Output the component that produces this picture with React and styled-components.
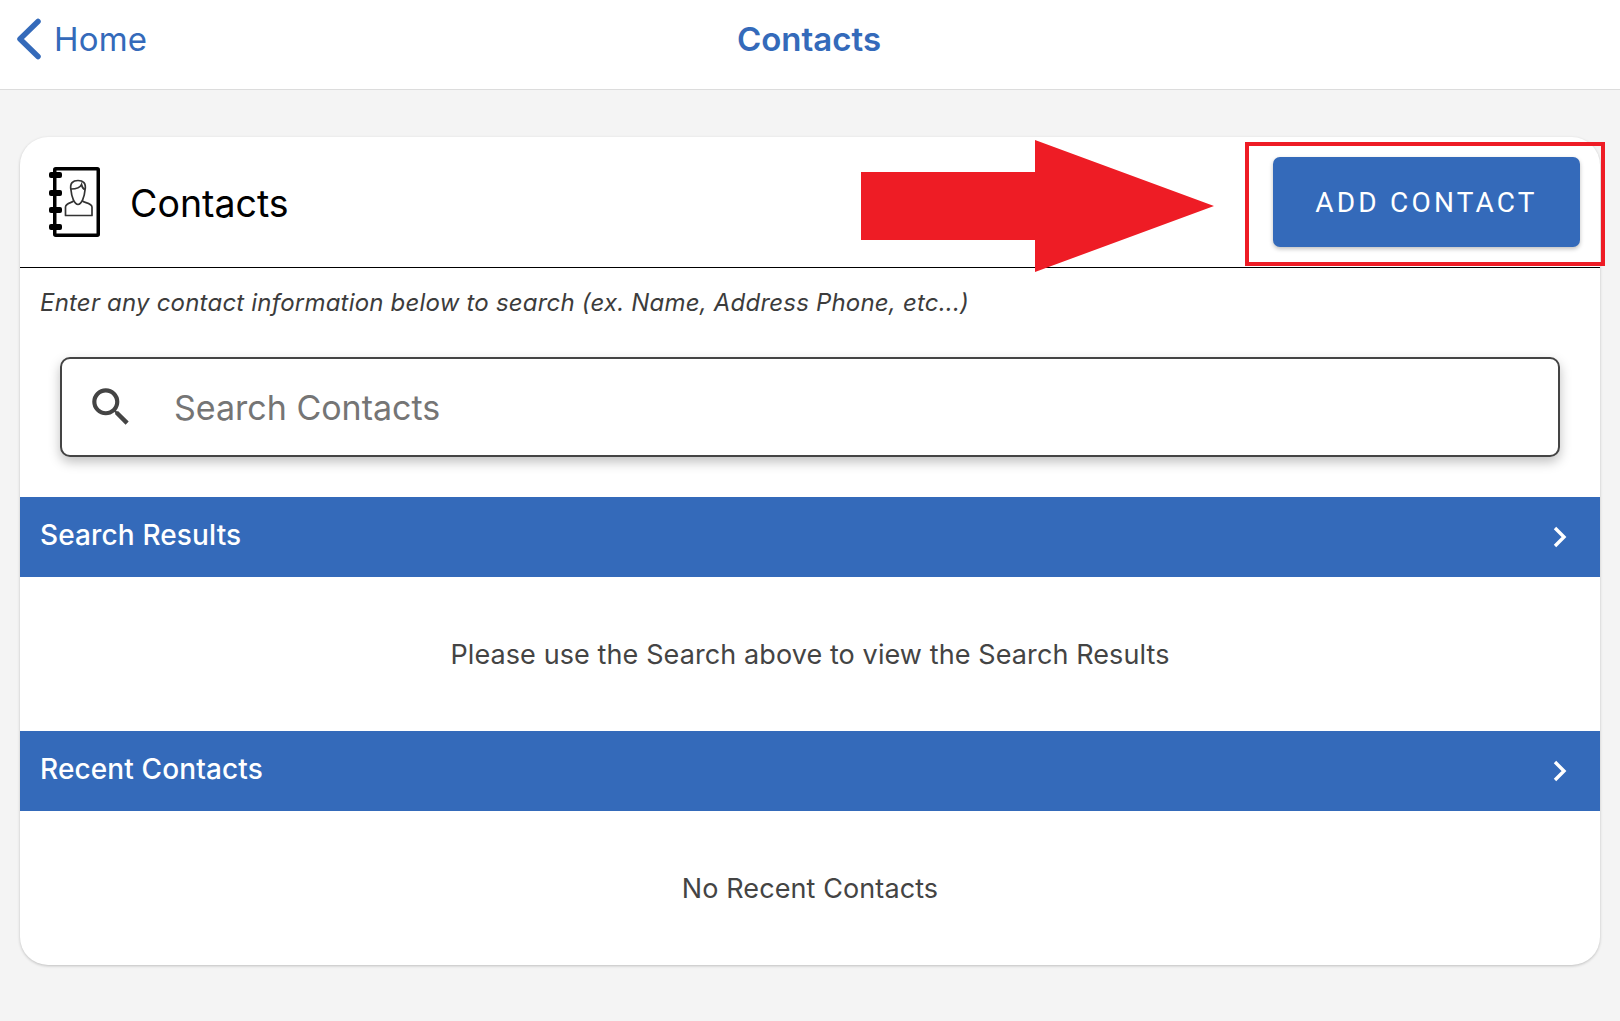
import React from 'react'
import styled, { createGlobalStyle } from 'styled-components'
import { MdSearch } from 'react-icons/md'

const GlobalStyle = createGlobalStyle`
  html, body {
    margin: 0;
    padding: 0;
    background: #f4f4f4;
    font-family: Inter, "Liberation Sans", sans-serif;
  }
`

const Page = styled.div`
  width: 1620px;
  height: 1021px;
  overflow: hidden;
  position: relative;
  background: #f4f4f4;
`

const NavBar = styled.header`
  height: 90px;
  box-sizing: border-box;
  background: #fff;
  border-bottom: 1px solid #dcdcdc;
  display: grid;
  grid-template-columns: 1fr auto 1fr;
  align-items: center;
  color: #346aba;
  padding-bottom: 11px;
  padding-left: 15px;
`

const BackLink = styled.a`
  display: flex;
  align-items: center;
  gap: 13px;
  font-size: 33px;
  letter-spacing: 0.2px;
`

const NavTitle = styled.div`
  font-size: 33px;
  font-weight: 600;
  margin-left: -17px;
`

const Card = styled.main`
  margin: 47px 20px 0;
  height: 828px;
  background: #fff;
  border-radius: 28px;
  box-shadow: 0 1px 3px rgba(0, 0, 0, 0.22);
  overflow: hidden;
`

const CardHeader = styled.div`
  height: 131px;
  box-sizing: border-box;
  border-bottom: 1px solid #000;
  display: flex;
  align-items: center;
  padding: 0 20px 0 29px;
`

const CardTitle = styled.h1`
  margin: 2px 0 0 29px;
  font-size: 37.5px;
  font-weight: 400;
  color: #000;
  flex: 1;
`

const AddButton = styled.button`
  width: 307px;
  height: 90px;
  padding: 2px 0 0;
  border: none;
  border-radius: 7px;
  background: #346aba;
  color: #fff;
  font-family: Roboto, sans-serif;
  font-size: 28px;
  font-weight: 400;
  letter-spacing: 3.2px;
  box-shadow: 0 2px 4px rgba(0, 0, 0, 0.25);
  margin-bottom: 1px;
`

const Hint = styled.p`
  margin: 0;
  padding: 20px 20px 0;
  font-size: 24px;
  line-height: 30px;
  font-style: italic;
  letter-spacing: 0.2px;
  color: #3c3c3c;
`

const SearchBox = styled.div`
  margin: 39px 40px 0;
  height: 100px;
  box-sizing: border-box;
  display: flex;
  align-items: center;
  padding-left: 24px;
  gap: 38px;
  border: 2px solid #444;
  border-radius: 10px;
  background: #fff;
  box-shadow: 0 5px 12px rgba(0, 0, 0, 0.25);
  color: #444;
`

const Placeholder = styled.span`
  font-size: 34px;
  color: #757575;
  margin-top: 1px;
`

const SectionBar = styled.div`
  height: 80px;
  box-sizing: border-box;
  background: #346aba;
  color: #fff;
  display: flex;
  align-items: center;
  justify-content: space-between;
  padding: 0 33px 0 20px;
  font-size: 28px;
  font-weight: 500;
  letter-spacing: 0.13px;
`

const SectionTitle = styled.span`
  margin-top: -4px;
`

const SectionBody = styled.div`
  height: ${p => p.$height}px;
  display: flex;
  align-items: center;
  justify-content: center;
  font-size: 27px;
  letter-spacing: 0.1px;
  color: #444;
`

const ResultsBar = styled(SectionBar)`
  margin-top: 40px;
`

const Callout = styled.div`
  position: absolute;
  left: 1245px;
  top: 142px;
  width: 360px;
  height: 124px;
  box-sizing: border-box;
  border: 4px solid #ee1c25;
`

const ArrowMark = styled.svg`
  position: absolute;
  left: 860px;
  top: 140px;
`

function BackChevron() {
  return (
    <svg width="26" height="44" viewBox="0 0 26 44" fill="none">
      <path d="M23 4.5 L5 22 L23 39.5" stroke="#346aba" strokeWidth="5.5" strokeLinecap="round" strokeLinejoin="round" />
    </svg>
  )
}

function BarChevron() {
  return (
    <svg width="14" height="22" viewBox="0 0 14 22" fill="none">
      <path d="M2 2 L11 11 L2 20" stroke="#fff" strokeWidth="3.4" />
    </svg>
  )
}

function ContactBookIcon() {
  return (
    <svg width="52" height="72" viewBox="0 0 52 72" fill="none" style={{ flex: 'none' }}>
      <rect x="5.75" y="2.75" width="43.5" height="66.5" rx="1" stroke="#000" strokeWidth="3.5" />
      <rect x="0" y="6" width="13" height="6" rx="2" fill="#000" />
      <rect x="0" y="24" width="13" height="6" rx="2" fill="#000" />
      <rect x="0" y="41" width="13" height="6" rx="2" fill="#000" />
      <rect x="0" y="58" width="13" height="6" rx="2" fill="#000" />
      <path d="M22 24 C20.5 17 24 14.5 29 14.5 C34 14.5 37.5 17 36 24 C35.5 31 32.5 38.5 29 38.5 C25.5 38.5 22.5 31 22 24 Z" stroke="#333" strokeWidth="1.7" />
      <path d="M22 23 C26 23 31 22 32.5 18.5 C33 21 34.5 23 36 23.5" stroke="#333" strokeWidth="1.7" />
      <path d="M24.5 35 C23 37 17 36.5 16.5 41 V49.5 H43 V41 C42.5 36.5 35 37 33.5 35" stroke="#333" strokeWidth="1.7" strokeLinejoin="round" />
    </svg>
  )
}

export default function App() {
  return (
    <Page>
      <GlobalStyle />
      <NavBar>
        <BackLink>
          <BackChevron />
          Home
        </BackLink>
        <NavTitle>Contacts</NavTitle>
      </NavBar>
      <Card>
        <CardHeader>
          <ContactBookIcon />
          <CardTitle>Contacts</CardTitle>
          <AddButton>ADD CONTACT</AddButton>
        </CardHeader>
        <Hint>Enter any contact information below to search (ex. Name, Address Phone, etc...)</Hint>
        <SearchBox>
          <MdSearch size={50} />
          <Placeholder>Search Contacts</Placeholder>
        </SearchBox>
        <ResultsBar>
          <SectionTitle>Search Results</SectionTitle>
          <BarChevron />
        </ResultsBar>
        <SectionBody $height={154}>Please use the Search above to view the Search Results</SectionBody>
        <SectionBar>
          <SectionTitle>Recent Contacts</SectionTitle>
          <BarChevron />
        </SectionBar>
        <SectionBody $height={155}>No Recent Contacts</SectionBody>
      </Card>
      <ArrowMark width="355" height="134" viewBox="0 0 355 134">
        <path d="M1 32 H175 V0 L354 66 L175 132 V100 H1 Z" fill="#ee1c25" />
      </ArrowMark>
      <Callout />
    </Page>
  )
}
